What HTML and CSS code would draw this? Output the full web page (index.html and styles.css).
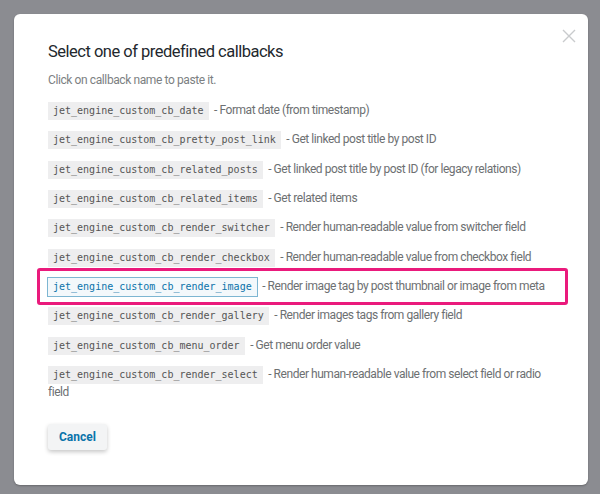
FILE: index.html
```html
<!DOCTYPE html>
<html>
<head>
<meta charset="utf-8">
<link rel="stylesheet" href="styles.css">
</head>
<body>
<div class="modal">
  <button class="close" aria-label="Close">
    <svg width="14" height="14" viewBox="0 0 14 14"><path d="M1 1L13 13M13 1L1 13" stroke="#c9cbcd" stroke-width="1.4" fill="none"/></svg>
  </button>
  <h2 class="title">Select one of predefined callbacks</h2>
  <p class="hint">Click on callback name to paste it.</p>
  <ul class="list">
    <li class="row"><code class="chip">jet_engine_custom_cb_date</code> - Format date (from timestamp)</li>
    <li class="row"><code class="chip">jet_engine_custom_cb_pretty_post_link</code> - Get linked post title by post ID</li>
    <li class="row"><code class="chip">jet_engine_custom_cb_related_posts</code> - Get linked post title by post ID (for legacy relations)</li>
    <li class="row"><code class="chip">jet_engine_custom_cb_related_items</code> - Get related items</li>
    <li class="row"><code class="chip">jet_engine_custom_cb_render_switcher</code> - Render human-readable value from switcher field</li>
    <li class="row"><code class="chip">jet_engine_custom_cb_render_checkbox</code> - Render human-readable value from checkbox field</li>
    <li class="row row-active"><code class="chip chip-active">jet_engine_custom_cb_render_image</code> - Render image tag by post thumbnail or image from meta<span class="highlight"></span></li>
    <li class="row"><code class="chip">jet_engine_custom_cb_render_gallery</code> - Render images tags from gallery field</li>
    <li class="row"><code class="chip">jet_engine_custom_cb_menu_order</code> - Get menu order value</li>
    <li class="row"><code class="chip">jet_engine_custom_cb_render_select</code> - Render human-readable value from select field or radio field</li>
  </ul>
  <button class="cancel">Cancel</button>
</div>
</body>
</html>
```
FILE: styles.css
```css
html, body {
  margin: 0;
  padding: 0;
}
body {
  width: 600px;
  height: 494px;
  background: #8b8c91;
  font-family: Roboto, "Liberation Sans", sans-serif;
  overflow: hidden;
}
.modal {
  position: relative;
  margin: 14px;
  width: 574px;
  height: 471px;
  box-sizing: border-box;
  background: #fff;
  border-radius: 6px;
  padding: 27px 34px 0 34px;
  box-shadow: 0 1px 2px rgba(0,0,0,0.25);
}
.close {
  position: absolute;
  top: 15px;
  right: 12px;
  border: 0;
  background: none;
  padding: 0;
  width: 14px;
  height: 14px;
}
.close svg { display: block; }
.title {
  margin: 0;
  font-size: 16.5px;
  letter-spacing: -0.5px;
  line-height: 22px;
  font-weight: 400;
  color: #23282d;
}
.hint {
  margin: 8px 0 0 0;
  font-size: 12px;
  letter-spacing: -0.4px;
  line-height: 18px;
  color: #7c7f82;
}
.list {
  list-style: none;
  margin: 13px 0 0 0;
  padding: 0;
  font-size: 12px;
  letter-spacing: -0.45px;
  line-height: 17px;
  color: #6d7072;
}
.row {
  position: relative;
  margin-bottom: 11.33px;
  min-height: 18px;
}
.chip {
  display: inline-block;
  vertical-align: top;
  font-family: "DejaVu Sans Mono", "Liberation Mono", monospace;
  font-size: 10px;
  letter-spacing: 0;
  line-height: 18px;
  padding: 0 5px;
  background: #eeeeef;
  color: #555;
  margin-right: 3px;
}
.chip-active {
  background: #f3f8fb;
  color: #0a73aa;
  box-shadow: 0 0 0 1px #7db6d2;
}
.highlight {
  position: absolute;
  left: -11px;
  top: -10px;
  width: 531px;
  height: 37px;
  box-sizing: border-box;
  border: 3px solid #ea1a7c;
  border-radius: 3px;
  pointer-events: none;
}
.cancel {
  margin-top: 12px;
  height: 26px;
  padding: 0 11px;
  border: 0;
  border-radius: 3px;
  background: #f3f4f5;
  color: #0a73aa;
  font-family: Roboto, "Liberation Sans", sans-serif;
  font-weight: 700;
  font-size: 12px;
  box-shadow: 0 2px 4px rgba(0,0,0,0.22);
}
```
